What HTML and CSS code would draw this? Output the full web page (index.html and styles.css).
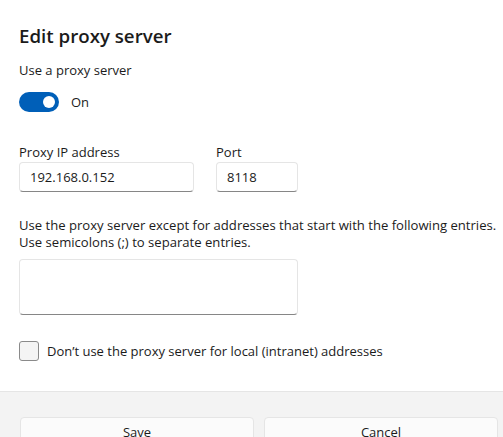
FILE: index.html
```html
<!DOCTYPE html>
<html lang="en">
<head>
<meta charset="utf-8">
<title>Edit proxy server</title>
<link rel="stylesheet" href="styles.css">
</head>
<body>
<div class="dialog">
  <div class="content">
    <h1 class="title">Edit proxy server</h1>
    <div class="label">Use a proxy server</div>
    <div class="toggle-row">
      <span class="toggle"><span class="knob"></span></span>
      <span class="toggle-text">On</span>
    </div>
    <div class="fields">
      <div class="field">
        <div class="label">Proxy IP address</div>
        <div class="input">192.168.0.152</div>
      </div>
      <div class="field">
        <div class="label">Port</div>
        <div class="input">8118</div>
      </div>
    </div>
    <p class="desc">Use the proxy server except for addresses that start with the following entries. Use semicolons (;) to separate entries.</p>
    <div class="textarea"></div>
    <div class="check-row">
      <span class="checkbox"></span>
      <span class="check-text">Don’t use the proxy server for local (intranet) addresses</span>
    </div>
  </div>
  <div class="footer">
    <button class="btn">Save</button>
    <button class="btn">Cancel</button>
  </div>
</div>
</body>
</html>
```

FILE: styles.css
```css
html, body {
  margin: 0;
  padding: 0;
  background: #ffffff;
  overflow: hidden;
}
body {
  font-family: "Segoe UI", "Open Sans", "Noto Sans", sans-serif;
  color: #1b1b1b;
  font-size: 13px;
}
.dialog {
  width: 518px;
  height: 437px;
  display: flex;
  flex-direction: column;
}
.content {
  padding: 22px 20px 0 19px;
  display: flex;
  flex-direction: column;
}
.title {
  margin: 0;
  font-size: 18.7px;
  font-weight: 600;
  line-height: 28px;
  height: 28px;
}
.label {
  font-size: 13px;
  line-height: 20px;
  height: 20px;
}
.content > .label {
  margin-top: 10px;
}
.toggle-row {
  margin-top: 12px;
  display: flex;
  align-items: center;
  gap: 12px;
  height: 20px;
}
.toggle {
  width: 40px;
  height: 20px;
  border-radius: 10px;
  background: #005fb8;
  display: flex;
  align-items: center;
  justify-content: flex-end;
  padding-right: 4px;
  box-sizing: border-box;
}
.knob {
  width: 12px;
  height: 12px;
  border-radius: 50%;
  background: #ffffff;
}
.toggle-text {
  font-size: 13px;
}
.fields {
  margin-top: 30px;
  display: grid;
  grid-template-columns: 175px 82px;
  column-gap: 22px;
}
.input {
  height: 30px;
  box-sizing: border-box;
  border: 1px solid #e5e5e5;
  border-bottom: 1px solid #868686;
  border-radius: 4px;
  background: #ffffff;
  padding: 0 10px;
  display: flex;
  align-items: center;
  font-size: 13px;
}
.desc {
  margin: 25px 0 0 0;
  font-size: 13.1px;
  line-height: 17px;
  width: 484px;
}
.textarea {
  margin-top: 8px;
  width: 279px;
  height: 56px;
  box-sizing: border-box;
  border: 1px solid #e5e5e5;
  border-bottom: 1px solid #868686;
  border-radius: 4px;
  background: #ffffff;
}
.check-row {
  margin-top: 26px;
  display: flex;
  align-items: center;
  gap: 8px;
  height: 20px;
}
.checkbox {
  width: 20px;
  height: 20px;
  box-sizing: border-box;
  border: 1px solid #8a8a8a;
  border-radius: 3px;
  background: #f4f4f4;
}
.check-text {
  font-size: 13px;
}
.footer {
  margin-top: 30px;
  flex: 1;
  background: #f3f3f3;
  border-top: 1px solid #e5e5e5;
  padding: 25px 20px 0 20px;
  display: grid;
  grid-template-columns: 1fr 1fr;
  column-gap: 10px;
  align-items: start;
}
.btn {
  height: 30px;
  border: 1px solid #e5e5e5;
  border-radius: 4px;
  background: #fbfbfb;
  font-family: inherit;
  font-size: 13px;
  color: #1b1b1b;
  padding: 0;
}
```
